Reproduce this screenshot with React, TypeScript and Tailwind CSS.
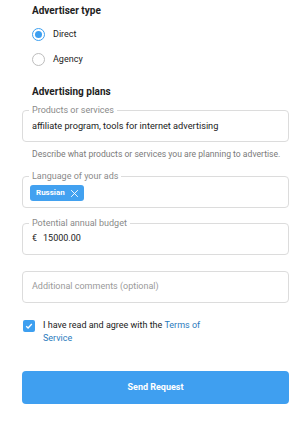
import React from "react";

function Box({ label, children }: { label?: string; children?: React.ReactNode }) {
  return (
    <div className="relative h-[32px] rounded-[4px] border border-[#dcdcdc] flex items-center pl-[9px]">
      {label && (
        <span className="absolute left-[6px] top-[-7px] bg-white px-[3px] text-[9px] leading-[12px] text-[#8a8a8a]">
          {label}
        </span>
      )}
      {children}
    </div>
  );
}

export default function App() {
  return (
    <div className="w-[296px] h-[437px] bg-white pl-[22px] pr-[7px] text-[#222]" style={{ fontFamily: "Roboto, 'Liberation Sans', sans-serif" }}>
      <div className="pl-[10px] pt-[5px] text-[10px] leading-[12px] font-bold text-[#1e1e1e]">Advertiser type</div>
      <div className="pl-[10px] mt-[5px]">
        <div className="h-[25px] flex items-center gap-[8px]">
          <span className="w-[13px] h-[13px] rounded-full border-[1.5px] border-[#3d9ff0] flex items-center justify-center">
            <span className="w-[7px] h-[7px] rounded-full bg-[#3d9ff0]" />
          </span>
          <span className="text-[9px] text-[#222]">Direct</span>
        </div>
        <div className="h-[25px] flex items-center gap-[8px]">
          <span className="w-[13px] h-[13px] rounded-full border border-[#bdbdbd]" />
          <span className="text-[9px] text-[#222]">Agency</span>
        </div>
      </div>
      <div className="pl-[10px] mt-[14px] text-[10px] leading-[12px] font-bold text-[#1e1e1e]">Advertising plans</div>
      <div className="mt-[12px]">
        <Box label="Products or services">
          <span className="text-[9.2px] text-[#222]">affiliate program, tools for internet advertising</span>
        </Box>
      </div>
      <div className="pl-[10px] mt-[6px] text-[8.6px] leading-[12px] text-[#7a7a7a] whitespace-nowrap">
        Describe what products or services you are planning to advertise.
      </div>
      <div className="mt-[16px]">
        <Box label="Language of your ads">
          <span className="ml-[-2px] mt-[2px] h-[16px] rounded-[3px] bg-[#42a1f0] flex items-center pl-[6px] pr-[5px] gap-[5px] text-white text-[8px] font-bold">
            Russian
            <svg width="9" height="9" viewBox="0 0 8 8" fill="none" stroke="white" strokeWidth="0.8">
              <path d="M1 1L7 7M7 1L1 7" />
            </svg>
          </span>
        </Box>
      </div>
      <div className="mt-[15px]">
        <Box label="Potential annual budget">
          <span className="text-[9px] text-[#222]">€</span>
          <span className="ml-[6px] text-[9px] text-[#222]">15000.00</span>
        </Box>
      </div>
      <div className="mt-[16px]">
        <Box>
          <span className="text-[9px] text-[#9a9a9a]">Additional comments (optional)</span>
        </Box>
      </div>
      <div className="mt-[16px] flex items-start">
        <span className="mt-[1px] ml-[1px] w-[12px] h-[12px] rounded-[2px] bg-[#3d9ff0] flex items-center justify-center shrink-0">
          <svg width="8" height="8" viewBox="0 0 8 8" fill="none" stroke="white" strokeWidth="1.3">
            <path d="M1.2 4.2L3.1 6L6.8 2" />
          </svg>
        </span>
        <div className="ml-[8px] w-[170px] text-[9px] leading-[13px] text-[#222]">
          <div>I have read and agree with the <span className="text-[#2b7bbd]">Terms of</span></div>
          <div className="text-[#2b7bbd]">Service</div>
        </div>
      </div>
      <button className="mt-[26px] w-full h-[33px] rounded-[4px] bg-[#3f9ff0] text-white text-[9px] font-bold">
        Send Request
      </button>
    </div>
  );
}
